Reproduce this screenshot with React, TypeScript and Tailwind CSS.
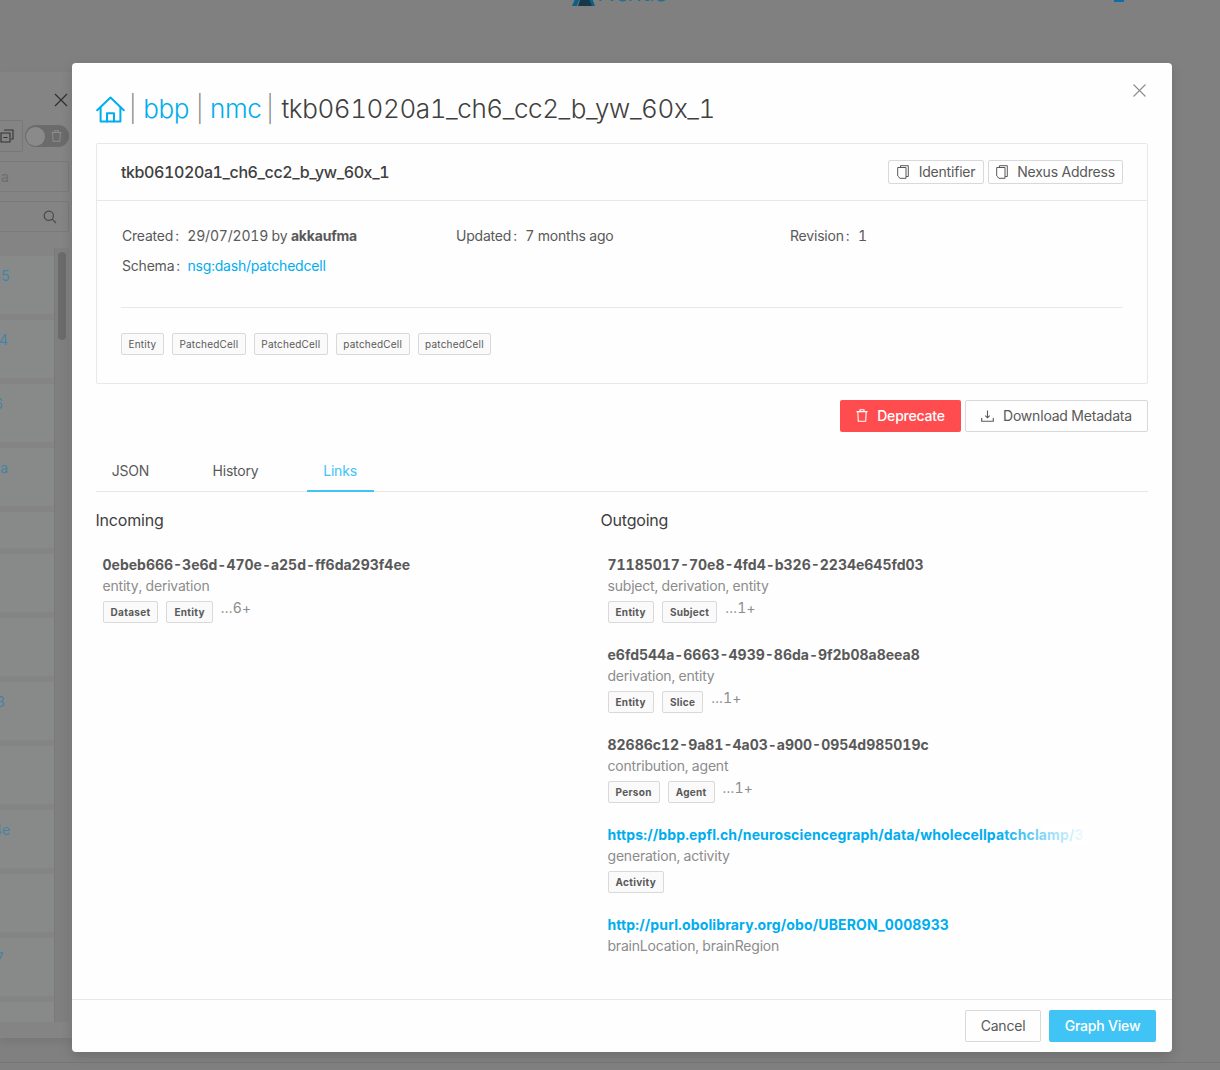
import React from "react";

const CopyIcon = () => (
  <svg width="12" height="14" viewBox="0 0 12 14" fill="none" className="shrink-0" stroke="#595959" strokeWidth="1">
    <path d="M3.5 2.5V.7h7.8v10.8H9" />
    <path d="M.7 2.5h8.3v10.8H3L.7 11V2.5z" />
  </svg>
);

const TrashIcon = () => (
  <svg width="12" height="13" viewBox="0 0 12 13" fill="none" stroke="currentColor" strokeWidth="1.1">
    <path d="M.5 2.6h11M4 2.6V.8h4v1.8M1.8 2.6l.5 9.7h7.4l.5-9.7" />
  </svg>
);

const DownloadIcon = () => (
  <svg width="13" height="12" viewBox="0 0 13 12" fill="none" stroke="#595959" strokeWidth="1.1">
    <path d="M6.5.5v7M4.3 5.6l2.2 2.2 2.2-2.2M.7 8v3.3h11.6V8" />
  </svg>
);

const HomeIcon = () => (
  <svg width="29" height="27" viewBox="0 0 29 27" fill="none" stroke="#00adee" strokeWidth="2" strokeLinejoin="round" strokeLinecap="round">
    <path d="M1.2 14.2 14.5 1.5l13.3 12.7" />
    <path d="M4.6 11.5v14h19.8v-14" />
    <path d="M11 25.5v-8.2h7v8.2" />
  </svg>
);

const Tag = ({ children, bold }: { children: React.ReactNode; bold?: boolean }) => (
  <span
    className={
      bold
        ? "inline-flex h-[22px] items-center rounded-[2px] border border-[#d9d9d9] bg-[#fafafa] px-[7px] text-[10px] font-bold leading-none tracking-[0.3px] text-[#595959]"
        : "inline-flex h-[22px] items-center rounded-[2px] border border-[#d9d9d9] bg-[#fafafa] px-[6.5px] text-[10px] leading-none tracking-[0.2px] text-[#595959]"
    }
  >
    {children}
  </span>
);

type LinkItem = {
  title: string;
  href?: boolean;
  fade?: boolean;
  sub: string;
  tags?: string[];
  more?: string;
};

const LinkRow = ({ item }: { item: LinkItem }) => (
  <div className="h-[90px] pl-[7px]">
    <div
      className={
        item.href
          ? "relative h-[21px] w-[480px] overflow-hidden whitespace-nowrap text-[14px] font-bold leading-[21px] tracking-[0.13px] text-[#00adee]"
          : "h-[21px] whitespace-nowrap text-[14px] font-bold leading-[21px] tracking-normal text-[#595959]"
      }
    >
      {item.title}
      {item.fade && (
        <span className="absolute inset-y-0 right-0 w-[90px] bg-gradient-to-r from-[#ffffff00] to-[#ffffff]" />
      )}
    </div>
    <div className="h-[21px] text-[14px] leading-[21px] text-[#8c8c8c]">{item.sub}</div>
    {item.tags && (
      <div className="mt-[4px] flex items-start gap-[3px]">
        {item.tags.map((t) => (
          <span key={t} className="mr-[5px]">
            <Tag bold>{t}</Tag>
          </span>
        ))}
        {item.more && <span className="-mt-[3px] text-[14px] leading-[21px] tracking-[0.2px] text-[#8c8c8c]">...{item.more}</span>}
      </div>
    )}
  </div>
);

const incoming: LinkItem[] = [
  { title: "0ebeb666-3e6d-470e-a25d-ff6da293f4ee", sub: "entity, derivation", tags: ["Dataset", "Entity"], more: "6+" },
];

const outgoing: LinkItem[] = [
  { title: "71185017-70e8-4fd4-b326-2234e645fd03", sub: "subject, derivation, entity", tags: ["Entity", "Subject"], more: "1+" },
  { title: "e6fd544a-6663-4939-86da-9f2b08a8eea8", sub: "derivation, entity", tags: ["Entity", "Slice"], more: "1+" },
  { title: "82686c12-9a81-4a03-a900-0954d985019c", sub: "contribution, agent", tags: ["Person", "Agent"], more: "1+" },
  { title: "https://bbp.epfl.ch/neurosciencegraph/data/wholecellpatchclamp/3...", href: true, fade: true, sub: "generation, activity", tags: ["Activity"] },
  { title: "http://purl.obolibrary.org/obo/UBERON_0008933", href: true, sub: "brainLocation, brainRegion" },
];

const rows = [
  { h: "h-[58px]", t: "35", p: "pr-[44px]" },
  { h: "h-[58px]", t: "4", p: "pr-[46px]" },
  { h: "h-[58px]", t: "6", p: "pr-[51px]" },
  { h: "h-[58px]", t: "a", p: "pr-[46px]" },
  { h: "h-[36px]", t: "", p: "" },
  { h: "h-[58px]", t: "", p: "" },
  { h: "h-[58px]", t: "", p: "" },
  { h: "h-[58px]", t: "8", p: "pr-[49px]" },
  { h: "h-[58px]", t: "", p: "" },
  { h: "h-[58px]", t: "4e", p: "pr-[44px]" },
  { h: "h-[58px]", t: "", p: "" },
  { h: "h-[58px]", t: "7", p: "pr-[50px]" },
  { h: "h-[20px]", t: "", p: "" },
];

export default function App() {
  return (
    <div className="relative h-[1070px] w-[1220px] overflow-hidden bg-[#808080] font-['Inter',sans-serif] text-[14px] tracking-[-0.2px] text-[#595959] tabular-nums">
      {/* page behind the overlay */}
      <div className="flex h-[72px] overflow-hidden">
        <div className="ml-[572px] flex h-[6px] items-end gap-[2px]">
          <svg width="23" height="16" viewBox="0 0 23 16" className="shrink-0">
            <path d="M0 16 7 0h4L5 16z" fill="#0f5f86" />
            <path d="M6 16 11 0h3l7 16z" fill="#17384a" />
            <path d="M13 0h4l6 16h-3z" fill="#0f5f86" />
          </svg>
          <span className="h-[6px] w-[73px] overflow-hidden">
            <span className="-mt-[20px] block text-[24px] font-light leading-[26px] text-[#23708f]">Nexus</span>
          </span>
        </div>
        <div className="ml-[444px] h-[2px] w-[10px] bg-[#0b6ea8]" />
      </div>

      <div className="flex h-[966px] w-[72px] flex-col overflow-hidden bg-[#848484] shadow-[0_4px_8px_rgba(0,0,0,0.08)]">
        <div className="flex h-[35px] items-end justify-end pr-[4px]">
          <svg width="14" height="14" viewBox="0 0 14 14" stroke="#2f2f2f" strokeWidth="1.2">
            <path d="M1 1l12 12M13 1 1 13" />
          </svg>
        </div>
        <div className="mt-[13px] flex h-[32px] items-center">
          <div className="flex h-[32px] w-[23px] items-center justify-end rounded-r-[2px] border border-l-0 border-[#787878] pr-[8px]">
            <svg width="14" height="14" viewBox="0 0 14 14" fill="none" stroke="#333333" strokeWidth="1.1">
              <path d="M4 1h9v9h-2" />
              <path d="M1 4h9v9H1zM3.5 8.5h4" />
            </svg>
          </div>
          <div className="ml-[2px] flex h-[22px] w-[44px] items-center justify-between rounded-full bg-[#6b6b6b] pl-[1px] pr-[7px]">
            <span className="h-[19px] w-[19px] rounded-full bg-[#8a8a8a]" />
            <svg width="11" height="12" viewBox="0 0 12 13" fill="none" stroke="#8c8c8c" strokeWidth="1.1">
              <path d="M.5 2.6h11M4 2.6V.8h4v1.8M1.8 2.6l.5 9.7h7.4l.5-9.7" />
            </svg>
          </div>
        </div>
        <div className="mt-[9px] flex h-[31px] w-[69px] items-center rounded-r-[2px] border border-l-0 border-[#7a7a7a] pl-px text-[14px] text-[#6d6d6d]">a</div>
        <div className="mt-[9px] flex h-[31px] w-[69px] items-center justify-end rounded-r-[2px] border border-l-0 border-[#7a7a7a] pr-[11px]">
          <svg width="14" height="14" viewBox="0 0 14 14" fill="none" stroke="#4a4a4a" strokeWidth="1.2">
            <circle cx="5.8" cy="5.8" r="4.6" />
            <path d="M9.2 9.2 13 13" />
          </svg>
        </div>
        <div className="mt-[16px] flex h-[774px] w-[69px] overflow-hidden">
          <div className="flex w-[55px] flex-col gap-[6px] overflow-hidden border-r border-[#7a7a7a] pt-[8px]">
            {rows.map((r, i) => (
              <div key={i} className={`${r.h} ${r.p} flex shrink-0 justify-end bg-[#888a8a]`}>
                <span className="mt-[9px] whitespace-nowrap text-[14px] leading-[21px] text-[#4583a3]">{r.t}</span>
              </div>
            ))}
          </div>
          <div className="w-[14px] bg-[#7f7f7f] pl-[3px] pt-[4px]">
            <div className="h-[88px] w-[8px] rounded-full bg-[#6b6b6b]" />
          </div>
        </div>
      </div>
      <div className="mt-[24px] h-px bg-[#767676]" />

      {/* modal */}
      <div className="absolute left-[72px] top-[63px] flex h-[989px] w-[1100px] flex-col rounded-[4px] bg-[#fefefe] shadow-[0_4px_12px_rgba(0,0,0,0.15)]">
        <button className="absolute right-[26px] top-[21px]">
          <svg width="13" height="13" viewBox="0 0 13 13" stroke="#8c8c8c" strokeWidth="1.1">
            <path d="M.5.5l12 12M12.5.5l-12 12" />
          </svg>
        </button>

        <div className="px-[24px] pt-[31px]">
          <h1 className="flex h-[30px] items-center whitespace-nowrap text-[26px] font-extralight leading-[30px] tracking-[-0.42px] text-[#404040]">
            <HomeIcon />
            <span className="ml-[4px] text-[#737373]">|</span>
            <span className="ml-[7px] font-light text-[#00adee]">bbp</span>
            <span className="ml-[7px] text-[#737373]">|</span>
            <span className="ml-[7px] font-light text-[#00adee]">nmc</span>
            <span className="ml-[5px] text-[#737373]">|</span>
            <span className="ml-[8px] font-light">tkb061020a1_ch6_cc2_b_yw_60x_1</span>
          </h1>

          <section className="mt-[19px] h-[241px] rounded-[2px] border border-[#e8e8e8]">
            <div className="flex h-[57px] items-center justify-between border-b border-[#e8e8e8] pl-[24px] pr-[24px]">
              <span className="text-[16px] font-medium tracking-[-0.4px] text-[#404040]">tkb061020a1_ch6_cc2_b_yw_60x_1</span>
              <div className="flex gap-[4px]">
                <button className="flex h-[24px] w-[96px] items-center justify-center gap-[10px] rounded-[2px] border border-[#d9d9d9] pb-px text-[14px] text-[#595959]">
                  <CopyIcon />
                  Identifier
                </button>
                <button className="flex h-[24px] w-[135px] items-center justify-center gap-[9px] rounded-[2px] border border-[#d9d9d9] pb-px text-[14px] text-[#595959]">
                  <CopyIcon />
                  Nexus Address
                </button>
              </div>
            </div>
            <div className="px-[24px] pt-[24px]">
              <div className="grid h-[21px] grid-cols-[334px_334px_1fr] pl-px leading-[21px]">
                <div>
                  Created<span className="ml-[2px] mr-[5px]">:</span> 29/07/2019 by <b className="font-bold">akkaufma</b>
                </div>
                <div>
                  Updated<span className="ml-[2px] mr-[5px]">:</span> 7 months ago
                </div>
                <div>
                  Revision<span className="ml-[2px] mr-[5px]">:</span> 1
                </div>
              </div>
              <div className="mt-[9px] h-[21px] pl-px leading-[21px]">
                Schema<span className="ml-[2px] mr-[4px]">:</span> <span className="text-[#00adee]">nsg:dash/patchedcell</span>
              </div>
              <div className="mt-[31px] border-t border-[#e8e8e8]" />
              <div className="mt-[25px] flex gap-[8px]">
                <Tag>Entity</Tag>
                <Tag>PatchedCell</Tag>
                <Tag>PatchedCell</Tag>
                <Tag>patchedCell</Tag>
                <Tag>patchedCell</Tag>
              </div>
            </div>
          </section>

          <div className="mt-[16px] flex justify-end gap-[4px]">
            <button className="flex h-[32px] w-[121px] items-center justify-center gap-[9px] rounded-[2px] bg-[#ff4d4f] pb-px text-[14px] font-medium text-white">
              <TrashIcon />
              Deprecate
            </button>
            <button className="flex h-[32px] w-[183px] items-center justify-center gap-[9px] rounded-[2px] border border-[#d9d9d9] pb-px text-[14px] text-[#595959]">
              <DownloadIcon />
              Download Metadata
            </button>
          </div>

          <div className="mt-[16px] flex h-[44px] border-b border-[#e8e8e8] text-[14px] leading-[21px]">
            <div className="flex w-[69px] justify-center pt-[12px]">JSON</div>
            <div className="ml-[28px] flex w-[85px] justify-center pt-[12px]">History</div>
            <div className="-mb-px ml-[29px] flex w-[67px] justify-center border-b-2 border-[#40c4f5] pt-[12px] pr-px text-[#40c4f5]">Links</div>
          </div>

          <div className="-ml-[0.5px] mt-[16px] flex">
            <div className="w-[505px]">
              <h2 className="h-[24px] text-[16px] font-normal leading-[24px] text-[#404040]">Incoming</h2>
              <div className="mt-[22px]">
                {incoming.map((it) => (
                  <LinkRow key={it.title} item={it} />
                ))}
              </div>
            </div>
            <div className="flex-1">
              <h2 className="h-[24px] text-[16px] font-normal leading-[24px] text-[#404040]">Outgoing</h2>
              <div className="mt-[22px]">
                {outgoing.map((it) => (
                  <LinkRow key={it.title} item={it} />
                ))}
              </div>
            </div>
          </div>
        </div>

        <div className="absolute inset-x-0 bottom-0 flex h-[53px] items-center justify-end gap-[8px] border-t border-[#e8e8e8] pr-[16px]">
          <button className="h-[32px] w-[76px] rounded-[2px] border border-[#d9d9d9] pb-px text-[14px] text-[#595959]">Cancel</button>
          <button className="h-[32px] w-[107px] rounded-[2px] bg-[#40c4f5] pb-px text-[14px] font-medium text-white">Graph View</button>
        </div>
      </div>
    </div>
  );
}
